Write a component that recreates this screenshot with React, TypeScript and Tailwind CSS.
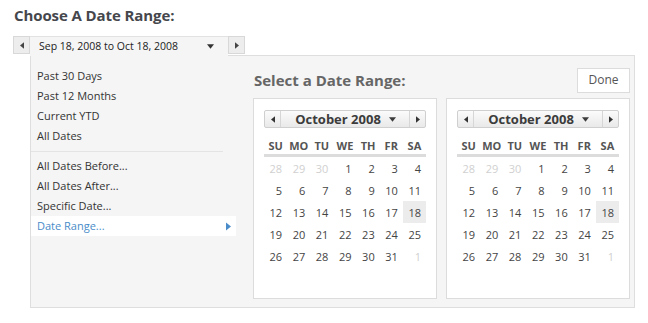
import React from "react";

const presets = ["Past 30 Days", "Past 12 Months", "Current YTD", "All Dates"];
const customs = ["All Dates Before...", "All Dates After...", "Specific Date..."];
const dayNames = ["SU", "MO", "TU", "WE", "TH", "FR", "SA"];

// October 2008, padded with the end of Sept / start of Nov
const days: { n: number; muted?: boolean }[] = [
  { n: 28, muted: true },
  { n: 29, muted: true },
  { n: 30, muted: true },
  ...Array.from({ length: 31 }, (_, i) => ({ n: i + 1 })),
  { n: 1, muted: true },
];

function Tri({ dir, className }: { dir: "l" | "r" | "d"; className?: string }) {
  const pts = dir === "l" ? "5,0 5,8 0,4" : dir === "r" ? "0,0 0,8 5,4" : "0,0 8,0 4,5";
  const w = dir === "d" ? 8 : 5;
  const h = dir === "d" ? 5 : 8;
  return (
    <svg width={w} height={h} viewBox={`0 0 ${w} ${h}`} className={className}>
      <polygon points={pts} fill="currentColor" />
    </svg>
  );
}

function Calendar() {
  return (
    <div className="w-[184px] h-[201px] bg-white border border-[#dcdcdc] pl-[10px] pt-[11px]">
      <div className="w-[162px] h-[18px] flex rounded-[2px] border border-[#cfcfcf] bg-gradient-to-b from-[#fbfbfb] to-[#e9e9e9] text-[#333]">
        <div className="w-[16px] flex items-center justify-center border-r border-[#d6d6d6]">
          <Tri dir="l" className="w-[4px] h-[7px]" />
        </div>
        <div className="flex-1 flex items-center justify-center gap-[8px] text-[13px] font-bold text-[#3c3c3c] leading-none">
          <span className="pl-[1px]">October 2008</span>
          <Tri dir="d" className="w-[7px] h-[5px]" />
        </div>
        <div className="w-[16px] flex items-center justify-center border-l border-[#d6d6d6]">
          <Tri dir="r" className="w-[4px] h-[7px]" />
        </div>
      </div>
      <div className="w-[162px] mt-[8px] h-[18px] grid grid-cols-7 border-b-[3px] border-[#dcdcdc] box-content">
        {dayNames.map((d) => (
          <div key={d} className="flex items-center justify-center text-[11px] font-bold text-[#555] leading-none">
            {d}
          </div>
        ))}
      </div>
      <div className="w-[162px] grid grid-cols-7">
        {days.map((d, i) => (
          <div
            key={i}
            className={
              "h-[22px] flex items-center justify-end pr-[5px] text-[11px] leading-none " +
              (d.muted ? "text-[#d0d0d0] " : "text-[#444] ") +
              (!d.muted && d.n === 18 ? "bg-[#ececec]" : "")
            }
          >
            {d.n}
          </div>
        ))}
      </div>
    </div>
  );
}

export default function App() {
  return (
    <div className="w-[648px] h-[323px] bg-white font-['Open_Sans',sans-serif] text-[#333]">
      <div className="pl-[14px] pt-[5px] h-[36px] text-[15px] font-bold text-[#45474d] leading-[20px] tracking-[-0.1px]">
        Choose A Date Range:
      </div>

      {/* range bar */}
      <div className="flex pl-[13px] h-[19px]">
        <div className="w-[17px] h-[18px] flex items-center justify-center bg-[#ededed] border border-[#d8d8d8] text-[#444]">
          <Tri dir="l" className="w-[4px] h-[7px]" />
        </div>
        <div className="w-[198px] h-[20px] relative z-10 flex items-center bg-[#f5f5f5] border-t border-[#e2e2e2] pl-[9px] pr-[14px] text-[10.5px] text-[#222]">
          <span className="flex-1">Sep 18, 2008 to Oct 18, 2008</span>
          <Tri dir="d" className="w-[7px] h-[5px] text-[#333]" />
        </div>
        <div className="w-[17px] h-[18px] flex items-center justify-center bg-[#ededed] border border-[#d8d8d8] text-[#444]">
          <Tri dir="r" className="w-[4px] h-[7px]" />
        </div>
      </div>

      {/* dropdown panel */}
      <div className="ml-[30px] w-[605px] h-[253px] bg-[#f5f5f5] border border-[#dedede] flex">
        <div className="w-[205px] pt-[10px] text-[11px] text-[#333]">
          {presets.map((p) => (
            <div key={p} className="h-[20px] flex items-center pl-[6px]">
              {p}
            </div>
          ))}
          <div className="mt-[5px] mb-[4px] h-px w-[192px] bg-[#e4e4e4]" />
          {customs.map((p) => (
            <div key={p} className="h-[20px] flex items-center pl-[6px]">
              {p}
            </div>
          ))}
          <div className="h-[20px] flex items-center pl-[6px] pr-[5px] bg-white text-[#4a8cc9]">
            <span className="flex-1">Date Range...</span>
            <Tri dir="r" className="w-[5px] h-[9px] text-[#4a8cc9]" />
          </div>
        </div>

        <div className="flex-1 pl-[17px] pr-[4px] pt-[12px]">
          <div className="flex items-center justify-between h-[24px] pl-[1px]">
            <span className="text-[15px] font-bold text-[#666] leading-none">Select a Date Range:</span>
            <button className="w-[53px] h-[25px] bg-white border border-[#dcdcdc] text-[12px] text-[#555]">
              Done
            </button>
          </div>
          <div className="mt-[6px] flex gap-[9px]">
            <Calendar />
            <Calendar />
          </div>
        </div>
      </div>
    </div>
  );
}
